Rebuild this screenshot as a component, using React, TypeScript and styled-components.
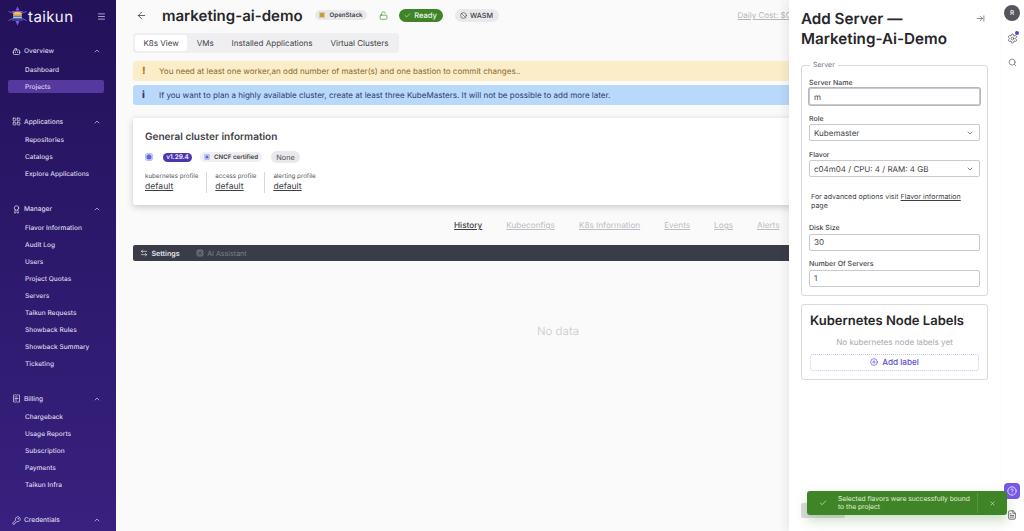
import React from "react";
import styled, { createGlobalStyle } from "styled-components";
import {
  ArrowLeft,
  ArrowRightToLine,
  ArrowLeftRight,
  Award,
  Ban,
  Bot,
  Check,
  ChevronDown,
  ChevronUp,
  CircleHelp,
  CirclePlus,
  Cpu,
  FileText,
  KeyRound,
  LayoutGrid,
  LockOpen,
  Menu,
  ReceiptText,
  Search,
  Settings,
  X,
} from "lucide-react";

const GlobalStyle = createGlobalStyle`
  html, body { margin: 0; padding: 0; height: 100%; overflow: hidden; }
  body {
    font-family: Inter, "Liberation Sans", sans-serif;
    background: #fafafa;
    color: #27272a;
    text-rendering: geometricPrecision;
  }
  * { box-sizing: border-box; }
`;

const Page = styled.div`
  display: flex;
  width: 1024px;
  height: 531px;
  overflow: hidden;
`;

const Sidebar = styled.aside`
  width: 116px;
  flex: none;
  height: 531px;
  overflow: hidden;
  padding: 6px 12px 0 8px;
  background: linear-gradient(180deg, #23115a 0%, #2e1a6e 55%, #38217f 100%);
  color: #e4e0f2;
`;

const Brand = styled.div`
  display: flex;
  align-items: center;
  height: 20px;
  margin-right: -4px;
`;

const BrandName = styled.span`
  font-size: 15px;
  font-weight: 400;
  letter-spacing: 0.4px;
  color: #f4f2fb;
  margin-left: 1px;
  flex: 1;
`;

const BurgerWrap = styled.span`
  display: flex;
  color: #d5d0e8;
  margin-right: 2px;
`;

const Nav = styled.nav`
  display: flex;
  flex-direction: column;
  margin-top: 15px;
`;

const Group = styled.div`
  display: flex;
  flex-direction: column;
  margin-bottom: 14.5px;
`;

const GroupHead = styled.div`
  display: flex;
  align-items: center;
  height: 20px;
  margin-bottom: 2px;
  padding: 0 3px 0 4px;
  font-size: 6.6px;
  font-weight: 500;
  color: #d9d5ea;
  gap: 3px;
  span { flex: 1; }
`;

const NavItem = styled.div<{ $active?: boolean }>`
  display: flex;
  align-items: center;
  height: 13px;
  margin-bottom: 4px;
  padding-left: 17px;
  border-radius: 2px;
  font-size: 6.55px;
  font-weight: 500;
  color: #dcd8ec;
  background: ${(p) => (p.$active ? "#56399f" : "transparent")};
`;

const Main = styled.main`
  flex: 1;
  min-width: 0;
  height: 531px;
  overflow: hidden;
  background: #fafafa;
  padding-left: 17px;
`;

const Inner = styled.div`
  width: 850px;
  display: flex;
  flex-direction: column;
`;

const TitleRow = styled.header`
  display: flex;
  align-items: center;
  height: 30px;
`;

const Back = styled.span`
  display: flex;
  color: #52525b;
  margin: 0 15px 0 3px;
`;

const Title = styled.h1`
  margin: 0 12px 0 0;
  font-size: 15px;
  font-weight: 600;
  color: #27272a;
  white-space: nowrap;
`;

const Pill = styled.span<{ $tone?: "grey" | "green" }>`
  display: inline-flex;
  align-items: center;
  justify-content: center;
  gap: 3px;
  width: ${(p) => (p.$tone === "green" ? "44px" : "52px")};
  height: ${(p) => (p.$tone === "green" ? "13px" : "10px")};
  border-radius: 7px;
  font-size: ${(p) => (p.$tone === "green" ? "7.6px" : "6.2px")};
  font-weight: ${(p) => (p.$tone === "green" ? 500 : 600)};
  white-space: nowrap;
  background: ${(p) => (p.$tone === "green" ? "#3f8527" : "#e9e9ec")};
  color: ${(p) => (p.$tone === "green" ? "#f3f7f0" : "#3f3f46")};
`;

const SquareMark = styled.i`
  display: block;
  width: 6px;
  height: 6px;
  margin-right: 2px;
  background: #c79a46;
  border: 1.5px solid #e2c88c;
`;

const LockWrap = styled.span`
  display: flex;
  color: #4f9a3a;
  margin: 0 11px 0 12px;
`;

const Wasm = styled(Pill)`
  width: 44px;
  height: 13px;
  margin-left: 12px;
  font-size: 7.2px;
  font-weight: 500;
`;

const Cost = styled.a`
  margin-left: 239px;
  font-size: 8px;
  color: #b5b5bb;
  text-decoration: underline;
  white-space: nowrap;
`;

const Tabs = styled.div`
  display: inline-flex;
  align-self: flex-start;
  align-items: center;
  height: 20px;
  margin-top: 3px;
  padding: 2px;
  border-radius: 4px;
  background: #efeff1;
`;

const Tab = styled.span<{ $active?: boolean }>`
  display: flex;
  align-items: center;
  height: 16px;
  padding: 0 8.4px;
  margin-right: 1px;
  border-radius: 3px;
  font-size: 8.05px;
  color: #3f3f46;
  white-space: nowrap;
  background: ${(p) => (p.$active ? "#fff" : "transparent")};
  &:last-child { margin-right: 0; }
`;

const Alert = styled.div<{ $tone: "warn" | "info" }>`
  display: flex;
  align-items: center;
  height: 20px;
  margin-top: ${(p) => (p.$tone === "warn" ? "8px" : "4px")};
  padding-left: 9px;
  border-radius: 3px;
  font-size: 8.05px;
  white-space: nowrap;
  background: ${(p) => (p.$tone === "warn" ? "#fcedc9" : "#b9d9fb")};
  color: ${(p) => (p.$tone === "warn" ? "#8a6a2c" : "#303a6e")};
  b { width: 17px; font-weight: 800; font-size: 10px; color: ${(p) => (p.$tone === "warn" ? "#a97c1f" : "#3a2f80")}; }
`;

const Card = styled.section`
  height: 87px;
  margin-top: 13px;
  padding: 13px 12px 0;
  border-radius: 3px;
  background: #fff;
  box-shadow: 0 2px 7px rgba(30, 30, 40, 0.22);
`;

const CardTitle = styled.h2`
  margin: 0;
  font-size: 10.05px;
  line-height: 13px;
  font-weight: 600;
  color: #3f3f46;
`;

const BadgeRow = styled.div`
  display: flex;
  align-items: center;
  margin-top: 7px;
  height: 12px;
`;

const Dot = styled.i<{ $size: number }>`
  display: block;
  width: ${(p) => p.$size}px;
  height: ${(p) => p.$size}px;
  border-radius: 50%;
  background: #5f67dc;
  box-shadow: inset 0 0 0 1.5px #c8cbf4;
`;

const Version = styled.span`
  margin: 0 8px 0 10px;
  width: 29px;
  height: 9px;
  line-height: 9px;
  text-align: center;
  border-radius: 5px;
  background: #4f35b0;
  color: #f0edfb;
  font-size: 6.4px;
  font-weight: 600;
`;

const Cncf = styled(Pill)`
  width: 62px;
  height: 10px;
  margin-right: 9px;
  font-size: 6.2px;
  background: #efeff2;
  gap: 4px;
`;

const None = styled(Pill)`
  width: 29px;
  height: 12px;
  font-size: 7.4px;
  font-weight: 400;
  color: #52525b;
`;

const Profiles = styled.div`
  display: flex;
  margin-top: 9px;
`;

const Profile = styled.div<{ $first?: boolean }>`
  height: 21px;
  padding: 0 8px;
  padding-left: ${(p) => (p.$first ? "0" : "8px")};
  border-left: ${(p) => (p.$first ? "none" : "1px solid #d8d8dc")};
  small { display: block; font-size: 6.2px; line-height: 9px; color: #52525b; white-space: nowrap; }
  a { display: block; font-size: 8.6px; line-height: 12px; color: #3f3f46; text-decoration: underline; }
`;

const SubTabs = styled.div`
  display: flex;
  gap: 24px;
  height: 11px;
  margin-top: 15px;
  padding-left: 321px;
`;

const SubTab = styled.a<{ $active?: boolean }>`
  font-size: 8.2px;
  line-height: 11px;
  text-decoration: underline;
  white-space: nowrap;
  color: ${(p) => (p.$active ? "#3f3f46" : "#bdbdc3")};
  font-weight: ${(p) => (p.$active ? 500 : 400)};
`;

const DarkBar = styled.div`
  display: flex;
  align-items: center;
  height: 16px;
  margin-top: 14px;
  padding-left: 7px;
  border-radius: 2px 0 0 2px;
  background: #3a3c47;
  font-size: 7.1px;
`;

const BarItem = styled.span<{ $muted?: boolean }>`
  display: flex;
  align-items: center;
  gap: 3.5px;
  margin-right: 16px;
  font-weight: ${(p) => (p.$muted ? 400 : 600)};
  color: ${(p) => (p.$muted ? "#7d7f89" : "#e6e6ea")};
`;

const NoData = styled.div`
  margin-top: 63px;
  text-align: center;
  font-size: 11.4px;
  line-height: 14px;
  color: #d2d2d6;
`;

const Drawer = styled.aside`
  width: 211px;
  flex: none;
  height: 531px;
  position: relative;
  padding: 9px 12px 0;
  background: #fff;
  box-shadow: -4px 0 8px rgba(30, 30, 40, 0.07);
`;

const DrawerHead = styled.div`
  display: flex;
  justify-content: space-between;
  align-items: flex-start;
`;

const DrawerTitle = styled.h2`
  margin: 0;
  font-size: 15.2px;
  line-height: 20px;
  font-weight: 600;
  color: #27272a;
`;

const CollapseWrap = styled.span`
  display: flex;
  color: #6b6b73;
  margin: 5px 3px 0 0;
`;

const Fieldset = styled.fieldset`
  margin: 12px 0 0;
  padding: 0 7px 8px;
  border: 1px solid #d9d9de;
  border-radius: 3px;
  legend { margin-left: 1px; padding: 0 3px; font-size: 7px; line-height: 8px; color: #71717a; }
`;

const Label = styled.label`
  display: block;
  margin: 8.5px 0 1.5px;
  font-size: 7px;
  line-height: 9px;
  font-weight: 500;
  color: #3f3f46;
`;

const Input = styled.div<{ $focus?: boolean }>`
  display: flex;
  align-items: center;
  justify-content: space-between;
  height: 17px;
  padding: 0 5px 0 4px;
  border: 1px solid #c9c9cf;
  border-bottom-width: ${(p) => (p.$focus ? "1px" : "1.5px")};
  border-radius: 2px;
  background: #fff;
  font-size: 8px;
  color: #3f3f46;
  box-shadow: ${(p) => (p.$focus ? "0 0 0 1px #b4b6c0" : "none")};
`;

const Hint = styled.p`
  margin: 15px 0 13px 2px;
  width: 155px;
  font-size: 7.05px;
  line-height: 9px;
  color: #3f3f46;
  a { text-decoration: underline; }
`;

const LabelsBox = styled.section`
  margin-top: 8px;
  height: 76px;
  padding: 9px 8px 0;
  border: 1px solid #d9d9de;
  border-radius: 3px;
`;

const LabelsTitle = styled.h3`
  margin: 0;
  font-size: 13px;
  line-height: 15px;
  font-weight: 600;
  color: #27272a;
  white-space: nowrap;
`;

const Empty = styled.div`
  margin-top: 8px;
  text-align: center;
  font-size: 8.1px;
  line-height: 10px;
  color: #a9a9b0;
`;

const AddLabel = styled.button`
  display: flex;
  align-items: center;
  justify-content: center;
  gap: 4px;
  width: 100%;
  height: 17px;
  margin-top: 7px;
  padding: 0;
  border: 1px dotted #bccff5;
  border-radius: 3px;
  background: #fff;
  font: 500 8.2px Inter, "Liberation Sans", sans-serif;
  color: #5b4bd6;
`;

const Toast = styled.div`
  position: absolute;
  left: 18px;
  top: 491px;
  width: 200px;
  height: 24px;
  display: flex;
  align-items: center;
  border-radius: 3px;
  background: #3f8527;
  color: #e3efdd;
  font-size: 6.7px;
  line-height: 8.4px;
  box-shadow: 0 6px 12px rgba(63, 133, 39, 0.25);
  z-index: 2;
`;

const ToastIcon = styled.span`
  display: flex;
  width: 31px;
  justify-content: center;
`;

const ToastText = styled.span`
  flex: 1;
  padding-right: 1px;
`;

const ToastClose = styled.span`
  display: flex;
  justify-content: center;
  align-items: center;
  width: 30px;
  height: 20px;
  border-left: 1px solid #57963f;
`;

const Ghost = styled.div`
  position: absolute;
  left: 12px;
  top: 503px;
  width: 44px;
  height: 15px;
  border-radius: 2px;
  background: #dcdcdf;
`;

const Rail = styled.div`
  width: 24px;
  flex: none;
  height: 531px;
  background: #fff;
  display: flex;
  flex-direction: column;
  align-items: center;
  padding-top: 5px;
  color: #6b6b73;
`;

const Avatar = styled.span`
  display: flex;
  align-items: center;
  justify-content: center;
  width: 16px;
  height: 16px;
  border-radius: 50%;
  background: #55555d;
  color: #f4f4f5;
  font-size: 6.5px;
  font-weight: 500;
`;

const RailIcon = styled.span<{ $gap: number }>`
  position: relative;
  display: flex;
  margin-top: ${(p) => p.$gap}px;
  em {
    position: absolute;
    right: -1px;
    top: -2px;
    width: 4px;
    height: 4px;
    border-radius: 50%;
    background: #5b3fd6;
  }
`;

const HelpButton = styled.span`
  display: flex;
  align-items: center;
  justify-content: center;
  width: 16px;
  height: 16px;
  margin-top: 416px;
  border-radius: 4px;
  background: #7657e8;
  color: #f3f0ff;
`;

const DocIcon = styled.span`
  display: flex;
  margin-top: 11px;
  color: #55555d;
`;

const TaikunLogo = () => (
  <svg width="19" height="20" viewBox="0 0 19 20" fill="none">
    <path d="M9.5 0.5L11.5 4.5H7.5ZM9.5 19.5L7.5 15H11.5Z" fill="#7a5ce8" />
    <path d="M0.5 5.5L6 7.5V12L0.5 14.5M18.5 5.5L13 7.5V12L18.5 14.5" stroke="#6f55dc" strokeWidth="1" />
    <path d="M4 5.5H15M4 14H15" stroke="#6f55dc" strokeWidth="1" />
    <ellipse cx="9.5" cy="7.6" rx="4.5" ry="1.8" fill="#e8c65a" />
    <rect x="5" y="8.6" width="9" height="1.6" fill="#d98f6a" />
    <rect x="5" y="10.4" width="9" height="2.2" rx="1" fill="#8fd0cf" />
  </svg>
);

const groups = [
  { name: "Overview", icon: <Bot size={9} />, items: ["Dashboard", "Projects"] },
  { name: "Applications", icon: <LayoutGrid size={9} />, items: ["Repositories", "Catalogs", "Explore Applications"] },
  {
    name: "Manager",
    icon: <Award size={9} />,
    items: [
      "Flavor Information",
      "Audit Log",
      "Users",
      "Project Quotas",
      "Servers",
      "Taikun Requests",
      "Showback Rules",
      "Showback Summary",
      "Ticketing",
    ],
  },
  {
    name: "Billing",
    icon: <ReceiptText size={9} />,
    items: ["Chargeback", "Usage Reports", "Subscription", "Payments", "Taikun Infra"],
  },
  { name: "Credentials", icon: <KeyRound size={9} />, items: [] },
];

const subTabs = ["History", "Kubeconfigs", "K8s Information", "Events", "Logs", "Alerts"];

export default function App() {
  return (
    <Page>
      <GlobalStyle />
      <Sidebar>
        <Brand>
          <TaikunLogo />
          <BrandName>taikun</BrandName>
          <BurgerWrap>
            <Menu size={9} />
          </BurgerWrap>
        </Brand>
        <Nav>
          {groups.map((g) => (
            <Group key={g.name}>
              <GroupHead>
                {g.icon}
                <span>{g.name}</span>
                <ChevronUp size={8} />
              </GroupHead>
              {g.items.map((item) => (
                <NavItem key={item} $active={item === "Projects"}>
                  {item}
                </NavItem>
              ))}
            </Group>
          ))}
        </Nav>
      </Sidebar>

      <Main>
        <Inner>
          <TitleRow>
            <Back>
              <ArrowLeft size={11} />
            </Back>
            <Title>marketing-ai-demo</Title>
            <Pill>
              <SquareMark />
              OpenStack
            </Pill>
            <LockWrap>
              <LockOpen size={9} />
            </LockWrap>
            <Pill $tone="green">
              <Check size={7} />
              Ready
            </Pill>
            <Wasm>
              <Ban size={7} />
              WASM
            </Wasm>
            <Cost>Daily Cost: $0.00</Cost>
          </TitleRow>
          <Tabs>
            <Tab $active>K8s View</Tab>
            <Tab>VMs</Tab>
            <Tab>Installed Applications</Tab>
            <Tab>Virtual Clusters</Tab>
          </Tabs>
          <Alert $tone="warn">
            <b>!</b>
            You need at least one worker,an odd number of master(s) and one bastion to commit changes..
          </Alert>
          <Alert $tone="info">
            <b>i</b>
            If you want to plan a highly available cluster, create at least three KubeMasters. It will not be possible to add more later.
          </Alert>
          <Card>
            <CardTitle>General cluster information</CardTitle>
            <BadgeRow>
              <Dot $size={8} />
              <Version>v1.29.4</Version>
              <Cncf>
                <Dot $size={6} />
                CNCF certified
              </Cncf>
              <None>None</None>
            </BadgeRow>
            <Profiles>
              <Profile $first>
                <small>kubernetes profile</small>
                <a>default</a>
              </Profile>
              <Profile>
                <small>access profile</small>
                <a>default</a>
              </Profile>
              <Profile>
                <small>alerting profile</small>
                <a>default</a>
              </Profile>
            </Profiles>
          </Card>
          <SubTabs>
            {subTabs.map((t) => (
              <SubTab key={t} $active={t === "History"}>
                {t}
              </SubTab>
            ))}
          </SubTabs>
          <DarkBar>
            <BarItem>
              <ArrowLeftRight size={8} />
              Settings
            </BarItem>
            <BarItem $muted>
              <Cpu size={8} />
              AI Assistant
            </BarItem>
          </DarkBar>
          <NoData>No data</NoData>
        </Inner>
      </Main>

      <Drawer>
        <DrawerHead>
          <DrawerTitle>
            Add Server —
            <br />
            Marketing-Ai-Demo
          </DrawerTitle>
          <CollapseWrap>
            <ArrowRightToLine size={9} />
          </CollapseWrap>
        </DrawerHead>
        <Fieldset>
          <legend>Server</legend>
          <Label>Server Name</Label>
          <Input $focus>m</Input>
          <Label>Role</Label>
          <Input>
            Kubemaster
            <ChevronDown size={8} />
          </Input>
          <Label>Flavor</Label>
          <Input>
            c04m04 / CPU: 4 / RAM: 4 GB
            <ChevronDown size={8} />
          </Input>
          <Hint>
            For advanced options visit <a>Flavor information</a> page
          </Hint>
          <Label>Disk Size</Label>
          <Input>30</Input>
          <Label>Number Of Servers</Label>
          <Input>1</Input>
        </Fieldset>
        <LabelsBox>
          <LabelsTitle>Kubernetes Node Labels</LabelsTitle>
          <Empty>No kubernetes node labels yet</Empty>
          <AddLabel>
            <CirclePlus size={8} />
            Add label
          </AddLabel>
        </LabelsBox>
        <Ghost />
        <Toast>
          <ToastIcon>
            <Check size={8} />
          </ToastIcon>
          <ToastText>Selected flavors were successfully bound to the project</ToastText>
          <ToastClose>
            <X size={7} />
          </ToastClose>
        </Toast>
      </Drawer>

      <Rail>
        <Avatar>R</Avatar>
        <RailIcon $gap={12}>
          <Settings size={11} />
          <em />
        </RailIcon>
        <RailIcon $gap={14}>
          <Search size={9} />
        </RailIcon>
        <HelpButton>
          <CircleHelp size={10} />
        </HelpButton>
        <DocIcon>
          <FileText size={10} />
        </DocIcon>
      </Rail>
    </Page>
  );
}
